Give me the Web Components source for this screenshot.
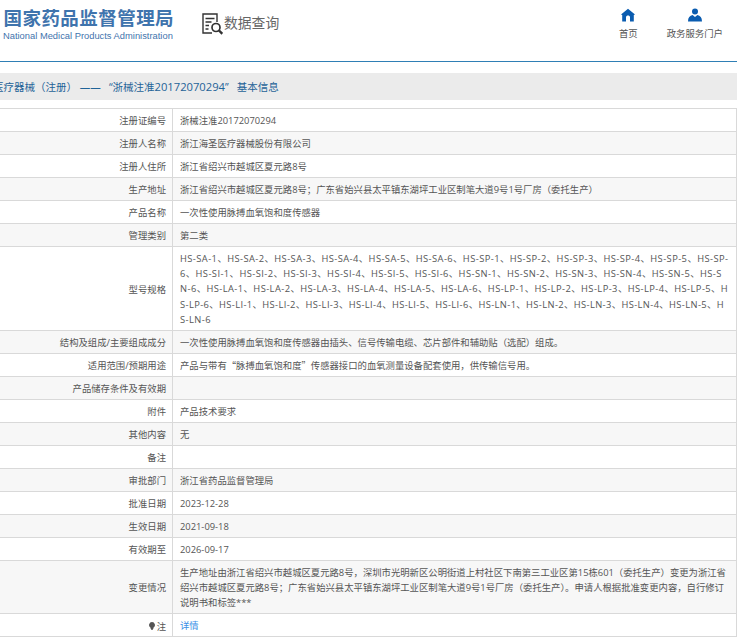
<!DOCTYPE html>
<html lang="zh">
<head>
<meta charset="utf-8">
<title>基本信息</title>
<style>
html, body { margin: 0; padding: 0; background: #fff; overflow: hidden; height: 640px; }
body { font-family: "Open Sans", "Noto Sans CJK SC", sans-serif; color: #555; }
</style>
</head>
<body>
<site-header></site-header>
<crumb-bar>医疗器械（注册）&nbsp;——&nbsp;&nbsp; “浙械注准<b>20172070294</b>” &nbsp;&nbsp;基本信息</crumb-bar>
<info-table>
  <info-row label="注册证编号">浙械注准20172070294</info-row>
  <info-row label="注册人名称">浙江海圣医疗器械股份有限公司</info-row>
  <info-row label="注册人住所">浙江省绍兴市越城区夏元路8号</info-row>
  <info-row label="生产地址">浙江省绍兴市越城区夏元路8号；广东省始兴县太平镇东湖坪工业区制笔大道9号1号厂房（委托生产）</info-row>
  <info-row label="产品名称">一次性使用脉搏血氧饱和度传感器</info-row>
  <info-row label="管理类别">第二类</info-row>
  <info-row label="型号规格" wide>HS-SA-1、HS-SA-2、HS-SA-3、HS-SA-4、HS-SA-5、HS-SA-6、HS-SP-1、HS-SP-2、HS-SP-3、HS-SP-4、HS-SP-5、HS-SP-<br>6、HS-SI-1、HS-SI-2、HS-SI-3、HS-SI-4、HS-SI-5、HS-SI-6、HS-SN-1、HS-SN-2、HS-SN-3、HS-SN-4、HS-SN-5、HS-S<br>N-6、HS-LA-1、HS-LA-2、HS-LA-3、HS-LA-4、HS-LA-5、HS-LA-6、HS-LP-1、HS-LP-2、HS-LP-3、HS-LP-4、HS-LP-5、H<br><span>S-LP-6、HS-LI-1、HS-LI-2、HS-LI-3、HS-LI-4、HS-LI-5、HS-LI-6、HS-LN-1、HS-LN-2、HS-LN-3、HS-LN-4、HS-LN-5、H</span><br>S-LN-6</info-row>
  <info-row label="结构及组成/主要组成成分">一次性使用脉搏血氧饱和度传感器由插头、信号传输电缆、芯片部件和辅助贴（选配）组成。</info-row>
  <info-row label="适用范围/预期用途" cjk>产品与带有“脉搏血氧饱和度”传感器接口的血氧测量设备配套使用，供传输信号用。</info-row>
  <info-row label="产品储存条件及有效期"></info-row>
  <info-row label="附件">产品技术要求</info-row>
  <info-row label="其他内容">无</info-row>
  <info-row label="备注"></info-row>
  <info-row label="审批部门">浙江省药品监督管理局</info-row>
  <info-row label="批准日期">2023-12-28</info-row>
  <info-row label="生效日期">2021-09-18</info-row>
  <info-row label="有效期至">2026-09-17</info-row>
  <info-row label="变更情况">生产地址由浙江省绍兴市越城区夏元路8号，深圳市光明新区公明街道上村社区下南第三工业区第15栋601（委托生产）变更为浙江省绍兴市越城区夏元路8号；广东省始兴县太平镇东湖坪工业区制笔大道9号1号厂房（委托生产）。申请人根据批准变更内容，自行修订说明书和标签***</info-row>
  <info-row label="注" hint><a href="#">详情</a></info-row>
</info-table>
<script>
class SiteHeader extends HTMLElement {
  constructor() {
    super();
    const root = this.attachShadow({mode: 'open'});
    root.innerHTML = `
<style>
:host { display: flex; height: 61px; border-bottom: 1px solid #2f7fb5; }
#logo { margin: 5.500px 0 0 3.500px; width: 172.500px; }
#cn { font: bold 18.5px/22px "Noto Sans CJK SC", sans-serif; color: #3f74ad; white-space: nowrap; letter-spacing: .45px; }
#en { font: 9.350px/12px "Liberation Sans", sans-serif; color: #3f74ad; white-space: nowrap; margin: 2px 0 0 -.5px; }
#query { display: flex; align-items: center; margin: 13px 0 0 26px; height: 22px; color: #666; font: 13.800px/22px "Noto Sans CJK SC", sans-serif; }
#query svg { width: 21px; height: 22px; margin-right: 1px; }
#query span { margin-top: -5px; }
nav { margin-left: auto; display: flex; padding-right: 14px; }
a { display: flex; flex-direction: column; align-items: center; font: 9.400px/12px "Noto Sans CJK SC", sans-serif; color: #555; text-decoration: none; padding-top: 8px; }
a svg { width: 14px; height: 14px; margin-bottom: 5px; }
#home { margin-right: 29px; }
</style>
<div id="logo"><div id="cn">国家药品监督管理局</div><div id="en">National Medical Products Administration</div></div>
<div id="query">
  <svg viewBox="0 0 21 22" fill="none" stroke="#333" stroke-width="1.400">
    <path d="M10 20H1V1h14v8"/><path d="M3.500 5.500h9M3.500 9h6M3.500 12.500h3.500M3.500 16h3"/>
    <circle cx="14" cy="14.500" r="4" stroke-width="1.700"/><path d="M17 17.500l3.300 3.300" stroke-width="2.400"/>
  </svg>
  <span>数据查询</span>
</div>
<nav>
  <a id="home" href="#"><svg viewBox="0 0 14 14"><path fill="#0a5cb0" d="M7 .8 14 6.600 12.800 7v6.500H9V9.300C9 6.900 5 6.900 5 9.300v4.200H1.200V7L0 6.600z"/></svg>首页</a>
  <a href="#"><svg viewBox="0 0 14 14"><circle cx="7" cy="3.500" r="3" fill="#0a5cb0"/><path fill="#0a5cb0" d="M0 13.500c0-4 1.800-6 4.600-6.500L7 9l2.400-2c2.800.5 4.600 2.500 4.600 6.500z"/></svg>政务服务门户</a>
</nav>`;
  }
}
customElements.define('site-header', SiteHeader);

class CrumbBar extends HTMLElement {
  constructor() {
    super();
    const root = this.attachShadow({mode: 'open'});
    root.innerHTML = `
<style>
:host { display: block; height: 27px; margin-top: 11px; background: #ebebeb; overflow: hidden; font: 10.500px/27px "Open Sans", "Noto Sans CJK SC", sans-serif; color: #1f6398; white-space: nowrap; }
span { display: block; margin-left: -7px; }
::slotted(b) { font-weight: normal; font-size: 11.200px; }
</style>
<span><slot></slot></span>`;
  }
}
customElements.define('crumb-bar', CrumbBar);

class InfoTable extends HTMLElement {
  constructor() {
    super();
    const root = this.attachShadow({mode: 'open'});
    root.innerHTML = `
<style>
:host { display: block; margin-top: 8px; border-top: 1px solid #d9d9d9; border-right: 1px solid #d9d9d9; font: 9.350px/15.200px "Open Sans", "Noto Sans CJK SC", sans-serif; color: #555; }
::slotted(info-row:nth-child(even)) { background: #f7f7f7; }
</style>
<slot></slot>`;
  }
}
customElements.define('info-table', InfoTable);

class InfoRow extends HTMLElement {
  constructor() {
    super();
    const root = this.attachShadow({mode: 'open'});
    const hint = this.hasAttribute('hint')
      ? '<svg viewBox="0 0 6 8"><path fill="#555" d="M3 0a3 3 0 0 1 1.600 5.500L4.200 7H1.800L1.400 5.500A3 3 0 0 1 3 0z"/><path fill="#555" d="M2 7.300h2V8H2z"/></svg>'
      : '';
    root.innerHTML = `
<style>
:host { display: grid; grid-template-columns: 173px 1fr; min-height: 22px; border-bottom: 1px solid #d9d9d9; }
#label { display: flex; justify-content: flex-end; align-items: center; padding: 2px 6px 0 0; border-right: 1px solid #d9d9d9; }
#value { padding: 4px 8px 2.800px 7px; word-break: break-all; }
:host([wide]) #value { letter-spacing: .425px; white-space: nowrap; padding-right: 0; }
:host([cjk]) #value { font-family: "Noto Sans CJK SC", sans-serif; }
::slotted(span) { letter-spacing: .38px; }
svg { width: 6px; height: 8px; margin-right: 2px; }
::slotted(a) { color: #3a8ee6; text-decoration: none; }
</style>
<div id="label">${hint}<span>${this.getAttribute('label')}</span></div>
<div id="value"><slot></slot></div>`;
  }
}
customElements.define('info-row', InfoRow);
</script>
</body>
</html>
